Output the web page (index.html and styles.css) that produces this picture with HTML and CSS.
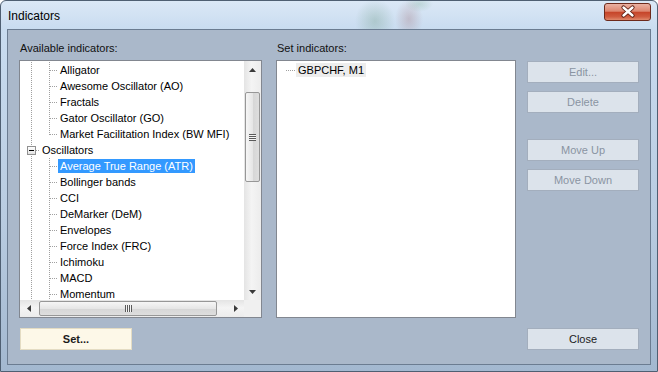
FILE: index.html
```html
<!DOCTYPE html>
<html lang="en">
<head>
    <meta charset="UTF-8">
    <title>Indicators</title>
    <link rel="stylesheet" href="styles.css">
</head>
<body>
    <div class="window">
        <div class="titlebar">
            <span class="title">Indicators</span>
            <button class="close-btn" title="Close">
                <svg width="45" height="16" viewBox="0 0 45 16">
                    <path d="M18.5 3.5 L27.5 11.5 M27.5 3.5 L18.5 11.5" stroke="#5a1a0e" stroke-width="4.2" stroke-linecap="round"/>
                    <path d="M18.5 3.5 L27.5 11.5 M27.5 3.5 L18.5 11.5" stroke="#ffffff" stroke-width="2.4" stroke-linecap="round"/>
                </svg>
            </button>
        </div>

        <div class="client">
            <div class="panes">
                <div class="pane pane-available">
                    <div class="caption">Available indicators:</div>
                    <div class="listbox tree-box">
                        <div class="tree-rows">
                            <div class="node leaf"><span class="label">Alligator</span></div>
                            <div class="node leaf"><span class="label">Awesome Oscillator (AO)</span></div>
                            <div class="node leaf"><span class="label">Fractals</span></div>
                            <div class="node leaf"><span class="label">Gator Oscillator (GO)</span></div>
                            <div class="node leaf last"><span class="label">Market Facilitation Index (BW MFI)</span></div>
                            <div class="node group"><span class="expander"></span><span class="label">Oscillators</span></div>
                            <div class="node leaf"><span class="label selected">Average True Range (ATR)</span></div>
                            <div class="node leaf"><span class="label">Bollinger bands</span></div>
                            <div class="node leaf"><span class="label">CCI</span></div>
                            <div class="node leaf"><span class="label">DeMarker (DeM)</span></div>
                            <div class="node leaf"><span class="label">Envelopes</span></div>
                            <div class="node leaf"><span class="label">Force Index (FRC)</span></div>
                            <div class="node leaf"><span class="label">Ichimoku</span></div>
                            <div class="node leaf"><span class="label">MACD</span></div>
                            <div class="node leaf"><span class="label">Momentum</span></div>
                        </div>

                        <div class="vscroll">
                            <div class="sb-arrow">
                                <svg width="7" height="4" viewBox="0 0 7 4"><polygon points="0,4 3.5,0 7,4" fill="#3a3a3a"/></svg>
                            </div>
                            <div class="vtrack">
                                <div class="thumb vthumb"><span class="grip grip-v"></span></div>
                            </div>
                            <div class="sb-arrow">
                                <svg width="7" height="4" viewBox="0 0 7 4"><polygon points="0,0 7,0 3.5,4" fill="#3a3a3a"/></svg>
                            </div>
                        </div>

                        <div class="hscroll">
                            <div class="sb-arrow">
                                <svg width="4" height="7" viewBox="0 0 4 7"><polygon points="4,0 4,7 0,3.5" fill="#3a3a3a"/></svg>
                            </div>
                            <div class="htrack">
                                <div class="thumb hthumb"><span class="grip grip-h"></span></div>
                            </div>
                            <div class="sb-arrow">
                                <svg width="4" height="7" viewBox="0 0 4 7"><polygon points="0,0 4,3.5 0,7" fill="#3a3a3a"/></svg>
                            </div>
                        </div>

                        <div class="corner"></div>
                    </div>
                </div>

                <div class="pane pane-set">
                    <div class="caption">Set indicators:</div>
                    <div class="listbox set-box">
                        <div class="node chart"><span class="label inactive">GBPCHF, M1</span></div>
                    </div>
                </div>

                <div class="actions">
                    <button class="btn" disabled>Edit...</button>
                    <button class="btn" disabled>Delete</button>
                    <button class="btn gap" disabled>Move Up</button>
                    <button class="btn" disabled>Move Down</button>
                </div>
            </div>

            <div class="footer">
                <button class="btn btn-set">Set...</button>
                <button class="btn btn-close">Close</button>
            </div>
        </div>
    </div>
</body>
</html>
```

FILE: styles.css
```css
:root {
    --frame-border: #4f5f72;
    --client-bg: #aab8ca;
    --client-border: #6b7c91;
    --list-border: #828790;
    --dot: #a0a0a0;
    --vdots: repeating-linear-gradient(to bottom, var(--dot) 0 1px, transparent 1px 2px);
    --hdots: repeating-linear-gradient(to right, var(--dot) 0 1px, transparent 1px 2px);
}

body {
    margin: 0;
    font-family: "Liberation Sans", Arial, sans-serif;
    font-size: 11px;
    color: #000;
}

.window {
    box-sizing: border-box;
    width: 658px;
    height: 372px;
    border: 1px solid var(--frame-border);
    border-radius: 6px 6px 0 0;
    padding: 0 6px 6px;
    display: flex;
    flex-direction: column;
    background: linear-gradient(to bottom, #dbe8f6 0, #c9dcf0 28px, #b8cbe0 60%, #a3b8d0 100%);
}

.titlebar {
    height: 28px;
    display: flex;
    align-items: flex-start;
    background:
        radial-gradient(ellipse 20px 22px at 368px 20px, rgba(90, 140, 110, 0.28), transparent),
        radial-gradient(ellipse 14px 20px at 402px 18px, rgba(150, 90, 95, 0.26), transparent),
        radial-gradient(ellipse 14px 8px at 412px 3px, rgba(90, 150, 110, 0.22), transparent);
}

.title {
    font-size: 12px;
    line-height: 14px;
    padding: 8px 0 0 1px;
}

.close-btn {
    margin-left: auto;
    margin-top: 2px;
    width: 47px;
    height: 18px;
    padding: 0;
    border: 1px solid #6d2a1c;
    border-radius: 3px;
    display: flex;
    align-items: center;
    justify-content: center;
    background: linear-gradient(to bottom, #eab1a2 0%, #dd8670 45%, #c6452a 52%, #cf5c40 80%, #e08a6d 100%);
}

.client {
    flex: 1;
    border: 1px solid var(--client-border);
    background: var(--client-bg);
    padding: 10px 11px 14px;
    display: flex;
    flex-direction: column;
}

.panes {
    display: flex;
}

.pane-available {
    width: 243px;
}

.pane-set {
    width: 240px;
    margin-left: 14px;
}

.caption {
    height: 20px;
    line-height: 16px;
    padding-left: 1px;
    color: #111;
}

.listbox {
    box-sizing: border-box;
    height: 258px;
    border: 1px solid var(--list-border);
    background: #fff;
}

.tree-box {
    display: grid;
    grid-template-columns: 1fr 17px;
    grid-template-rows: 1fr 17px;
    overflow: hidden;
}

.tree-rows {
    padding-top: 1px;
    overflow: hidden;
}

.set-box {
    padding-top: 1px;
}

/* tree nodes */
.node {
    height: 16px;
    display: flex;
    align-items: center;
    white-space: nowrap;
    background-repeat: no-repeat;
}

.label {
    line-height: 14px;
    padding: 0 2px;
}

.label.selected {
    background: #3399ff;
    color: #fff;
}

.label.inactive {
    background: #ededed;
}

.leaf {
    padding-left: 38px;
    background-image: var(--vdots), var(--vdots), var(--hdots);
    background-size: 1px 100%, 1px 100%, 8px 1px;
    background-position: 11px 0, 29px 0, 30px 8px;
}

.leaf.last {
    background-size: 1px 100%, 1px 9px, 8px 1px;
}

.group {
    padding-left: 7px;
    background-image: var(--vdots), var(--hdots);
    background-size: 1px 100%, 4px 1px;
    background-position: 11px 0, 16px 8px;
}

.expander {
    box-sizing: border-box;
    width: 9px;
    height: 9px;
    margin-right: 4px;
    border: 1px solid #919191;
    background:
        linear-gradient(#000, #000) center / 5px 1px no-repeat,
        linear-gradient(#fff, #e2e2e2);
}

.chart {
    padding-left: 19px;
    background-image: var(--hdots);
    background-size: 9px 1px;
    background-position: 9px 8px;
}

/* scrollbars */
.vscroll {
    display: flex;
    flex-direction: column;
    background: linear-gradient(to right, #e4e4e4, #f4f4f4 45%, #ececec);
}

.hscroll {
    display: flex;
    background: linear-gradient(to bottom, #e4e4e4, #f4f4f4 45%, #ececec);
}

.sb-arrow {
    flex: none;
    width: 17px;
    height: 17px;
    display: flex;
    align-items: center;
    justify-content: center;
}

.vtrack {
    flex: 1;
    padding-top: 14px;
}

.htrack {
    flex: 1;
    padding-left: 2px;
    display: flex;
    align-items: center;
}

.thumb {
    box-sizing: border-box;
    border: 1px solid #979797;
    border-radius: 2px;
    display: flex;
    align-items: center;
    justify-content: center;
}

.vthumb {
    height: 90px;
    margin: 0 1px;
    background: linear-gradient(to right, #f6f6f6, #e6e6e6 50%, #d6d6d6 51%, #dedede);
}

.hthumb {
    width: 178px;
    height: 15px;
    background: linear-gradient(to bottom, #f6f6f6, #e6e6e6 50%, #d6d6d6 51%, #dedede);
}

.grip {
    width: 7px;
    height: 7px;
}

.grip-v {
    background: repeating-linear-gradient(to bottom, #5a5a5a 0 1px, #f4f4f4 1px 2px);
}

.grip-h {
    background: repeating-linear-gradient(to right, #5a5a5a 0 1px, #f4f4f4 1px 2px);
}

.corner {
    background: #f0f0f0;
}

/* buttons */
.actions {
    width: 112px;
    margin-left: 11px;
    padding-top: 21px;
    display: flex;
    flex-direction: column;
}

.btn {
    box-sizing: border-box;
    height: 22px;
    padding: 0;
    border: 1px solid #a3aebd;
    background: #dce3eb;
    font-family: "Liberation Sans", Arial, sans-serif;
    font-size: 11px;
    color: #8a94a2;
}

.actions .btn + .btn {
    margin-top: 8px;
}

.actions .btn.gap {
    margin-top: 26px;
}

.footer {
    margin-top: 10px;
    display: flex;
    justify-content: space-between;
}

.btn-set {
    width: 112px;
    margin-left: 1px;
    background: #fdf8e8;
    border-color: #e4dcc3;
    font-weight: bold;
    color: #1b1b1b;
}

.btn-close {
    width: 112px;
    color: #1b1b1b;
}
```
